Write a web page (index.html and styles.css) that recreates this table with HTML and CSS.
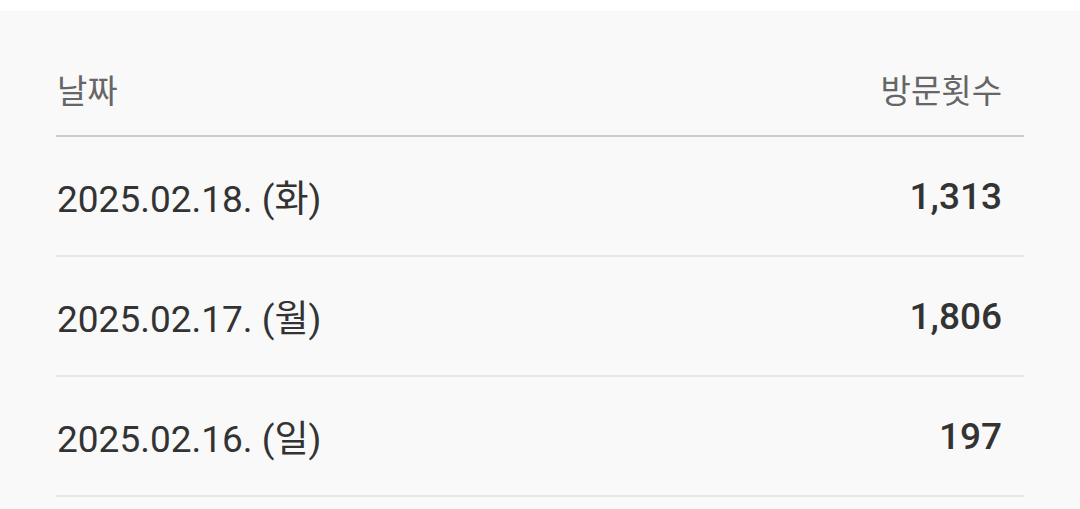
FILE: index.html
```html
<!DOCTYPE html>
<html lang="ko">
<head>
<meta charset="utf-8">
<link rel="stylesheet" href="styles.css">
</head>
<body>
<div class="top-strip"></div>
<main class="panel">
  <div class="table">
    <div class="row head">
      <span class="col-date">날짜</span>
      <span class="col-count">방문횟수</span>
    </div>
    <div class="row">
      <span class="col-date">2025.02.18. (화)</span>
      <span class="col-count num">1,313</span>
    </div>
    <div class="row">
      <span class="col-date">2025.02.17. (월)</span>
      <span class="col-count num">1,806</span>
    </div>
    <div class="row">
      <span class="col-date">2025.02.16. (일)</span>
      <span class="col-count num">197</span>
    </div>
  </div>
</main>
</body>
</html>
```

FILE: styles.css
```css
html, body {
  margin: 0;
  padding: 0;
  background: #f9f9f9;
}
body {
  font-family: Roboto, "Noto Sans CJK KR", sans-serif;
  color: #333333;
  width: 1080px;
  height: 509px;
  overflow: hidden;
}
.top-strip {
  height: 11px;
  background: #ffffff;
}
.panel {
  padding: 0 56px;
}
.table {
  display: flex;
  flex-direction: column;
}
.row {
  display: flex;
  justify-content: space-between;
  align-items: center;
  height: 118px;
  padding: 0 22px 0 1px;
  border-bottom: 2px solid #e6e6e6;
  font-size: 37px;
}
.row.head {
  height: 126px;
  padding-top: 0;
  align-items: flex-end;
  box-sizing: border-box;
  padding-bottom: 22px;
  border-bottom: 2px solid #cccccc;
  color: #666666;
  font-size: 33px;
}
.num {
  font-weight: 500;
}
```
